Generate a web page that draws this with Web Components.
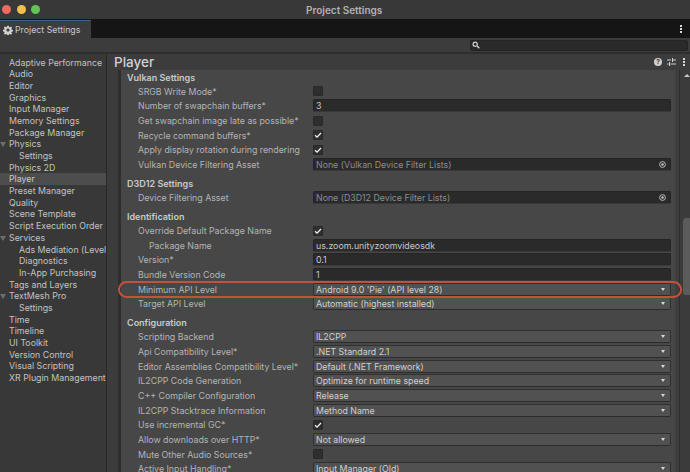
<!DOCTYPE html>
<html>
<head>
<meta charset="utf-8">
<title>Project Settings</title>
<style>
  html, body { margin: 0; padding: 0; background: #3c3c3c; }
  body { width: 690px; height: 472px; overflow: hidden; font-family: Inter, "Liberation Sans", sans-serif; font-size: 8.8px; color: #c4c4c4; }
</style>
</head>
<body>
<settings-window>
  <nav-item>Adaptive Performance</nav-item>
  <nav-item>Audio</nav-item>
  <nav-item>Editor</nav-item>
  <nav-item>Graphics</nav-item>
  <nav-item>Input Manager</nav-item>
  <nav-item>Memory Settings</nav-item>
  <nav-item>Package Manager</nav-item>
  <nav-item fold>Physics</nav-item>
  <nav-item sub>Settings</nav-item>
  <nav-item>Physics 2D</nav-item>
  <nav-item active>Player</nav-item>
  <nav-item>Preset Manager</nav-item>
  <nav-item>Quality</nav-item>
  <nav-item>Scene Template</nav-item>
  <nav-item>Script Execution Order</nav-item>
  <nav-item fold>Services</nav-item>
  <nav-item sub>Ads Mediation (Level</nav-item>
  <nav-item sub>Diagnostics</nav-item>
  <nav-item sub>In-App Purchasing</nav-item>
  <nav-item>Tags and Layers</nav-item>
  <nav-item fold>TextMesh Pro</nav-item>
  <nav-item sub>Settings</nav-item>
  <nav-item>Time</nav-item>
  <nav-item>Timeline</nav-item>
  <nav-item>UI Toolkit</nav-item>
  <nav-item>Version Control</nav-item>
  <nav-item>Visual Scripting</nav-item>
  <nav-item>XR Plugin Management</nav-item>

  <section-head slot="props" style="height:12px">Vulkan Settings</section-head>
  <prop-row slot="props" label="SRGB Write Mode*" type="check"></prop-row>
  <prop-row slot="props" label="Number of swapchain buffers*" type="text" value="3"></prop-row>
  <prop-row slot="props" label="Get swapchain image late as possible*" type="check"></prop-row>
  <prop-row slot="props" label="Recycle command buffers*" type="check" checked></prop-row>
  <prop-row slot="props" label="Apply display rotation during rendering" type="check" checked></prop-row>
  <prop-row slot="props" label="Vulkan Device Filtering Asset" type="object" value="None (Vulkan Device Filter Lists)"></prop-row>
  <section-head slot="props">D3D12 Settings</section-head>
  <prop-row slot="props" label="Device Filtering Asset" type="object" value="None (D3D12 Device Filter Lists)"></prop-row>
  <section-head slot="props">Identification</section-head>
  <prop-row slot="props" label="Override Default Package Name" type="check" checked></prop-row>
  <prop-row slot="props" label="Package Name" type="text" value="us.zoom.unityzoomvideosdk" indent></prop-row>
  <prop-row slot="props" label="Version*" type="text" value="0.1"></prop-row>
  <prop-row slot="props" label="Bundle Version Code" type="text" value="1"></prop-row>
  <prop-row slot="props" label="Minimum API Level" type="select" value="Android 9.0 'Pie' (API level 28)"></prop-row>
  <prop-row slot="props" label="Target API Level" type="select" value="Automatic (highest installed)"></prop-row>
  <section-head slot="props">Configuration</section-head>
  <prop-row slot="props" label="Scripting Backend" type="select" value="IL2CPP"></prop-row>
  <prop-row slot="props" label="Api Compatibility Level*" type="select" value=".NET Standard 2.1"></prop-row>
  <prop-row slot="props" label="Editor Assemblies Compatibility Level*" type="select" value="Default (.NET Framework)"></prop-row>
  <prop-row slot="props" label="IL2CPP Code Generation" type="select" value="Optimize for runtime speed"></prop-row>
  <prop-row slot="props" label="C++ Compiler Configuration" type="select" value="Release"></prop-row>
  <prop-row slot="props" label="IL2CPP Stacktrace Information" type="select" value="Method Name"></prop-row>
  <prop-row slot="props" label="Use incremental GC*" type="check" checked></prop-row>
  <prop-row slot="props" label="Allow downloads over HTTP*" type="select" value="Not allowed"></prop-row>
  <prop-row slot="props" label="Mute Other Audio Sources*" type="check"></prop-row>
  <prop-row slot="props" label="Active Input Handling*" type="select" value="Input Manager (Old)"></prop-row>
</settings-window>

<script>
(function() {
  //=== Window frame
  class SettingsWindow extends HTMLElement {
    constructor() {
      super();
      const shadowRoot = this.attachShadow({ mode: 'open' });
      shadowRoot.innerHTML = `
<style>
:host { display: flex; flex-direction: column; width: 690px; height: 472px; position: relative; overflow: hidden; background: #3c3c3c; }
.title { height: 19px; flex: none; display: flex; align-items: center; background: #383838; position: relative; }
.lights { display: flex; gap: 5.67px; padding-left: 2px; }
.lights i { width: 9px; height: 9px; border-radius: 50%; }
.name { flex: 1; text-align: center; font-size: 10px; font-weight: 600; color: #b2b2b2; margin-left: -42px; }
.tabs { height: 19px; flex: none; display: flex; justify-content: space-between; align-items: center; background: #151515; }
.tab { width: 91px; height: 18px; box-sizing: border-box; align-self: flex-end; background: #3c3c3c; border-top: 1px solid #3f6287; display: flex; align-items: center; gap: 2px; padding-left: 3px; font-size: 8.8px; color: #c8c8c8; }
.dots { display: block; margin-right: 8px; }
.tools { height: 16px; flex: none; display: flex; justify-content: flex-end; align-items: center; box-sizing: border-box; background: #3c3c3c; border-bottom: 2px solid #2e2e2e; padding-right: 2px; }
.search { width: 218px; height: 11px; border-radius: 3px; background: #2a2a2a; box-shadow: inset 0 0 0 1px #242424; display: flex; align-items: center; padding-left: 2px; box-sizing: border-box; }
.main { flex: 1; display: flex; min-height: 0; }
.side { width: 106px; flex: none; padding-top: 2.5px; border-right: 1px solid #282828; background: #383838; overflow: hidden; }
.right { flex: 1; display: flex; min-width: 0; flex-direction: column; }
.head { height: 16px; flex: none; display: flex; align-items: center; justify-content: space-between; background: #3c3c3c; padding: 0 5px 0 7px; }
.head h1 { margin: 0; font-size: 13.5px; font-weight: 500; color: #d2d2d2; line-height: 16px; }
.head .icons { display: flex; align-items: center; gap: 5px; }
.body { flex: 1; display: flex; min-height: 0; }
.gutter { width: 11px; flex: none; background: #3c3c3c; }
.bar { width: 3px; flex: none; background: #2e2e2e; }
.panel { width: 554px; flex: none; background: #474747; padding-top: 2px; box-sizing: border-box; overflow: hidden; }
.scroll { flex: 1; display: flex; background: #3e3e3e; position: relative; }
.scroll .lane { margin-left: 4px; flex: 1; background: #3b3b3b; border-left: 1px solid #2c2c2c; position: relative; }
.arrow { position: absolute; right: 0; top: 4px; width: 0; height: 0; border: 3px solid transparent; border-top: 0; border-bottom: 3px solid #c8c8c8; }
.thumb { position: absolute; left: 3px; right: 0; top: 148px; height: 77px; background: #5b5b5b; border-radius: 3px 0 0 3px; }
.oval { position: absolute; left: 118px; top: 281px; width: 564px; height: 17px; box-sizing: border-box; border: 2px solid #c4513a; border-radius: 9px; pointer-events: none; }
</style>
<div class="title">
  <div class="lights"><i style="background:#ec6a5e"></i><i style="background:#f4bf4f"></i><i style="background:#61c554"></i></div>
  <div class="name">Project Settings</div>
</div>
<div class="tabs">
  <div class="tab">
    <svg width="10" height="10" viewBox="0 0 16 16"><path fill="#d0d0d0" fill-rule="evenodd" d="M6.700 1h2.600l.4 2 1.300.6 1.800-1.100 1.800 1.800-1.100 1.800.5 1.300 2 .4v2.400l-2 .4-.5 1.300 1.100 1.800-1.800 1.800-1.800-1.100-1.300.5-.4 2H6.700l-.4-2-1.300-.5-1.800 1.100-1.800-1.800 1.100-1.800-.5-1.300-2-.4V7.400l2-.4.5-1.300-1.100-1.800 1.800-1.800L5 3.600l1.300-.6zM8 5.500a2.500 2.500 0 1 0 0 5 2.500 2.500 0 0 0 0-5z"/></svg>
    <span>Project Settings</span>
  </div>
  <svg class="dots" width="2" height="8" viewBox="0 0 2 8"><path fill="#d8d8d8" d="M0 0h2v2H0zM0 3h2v2H0zM0 6h2v2H0z"/></svg>
</div>
<div class="tools">
  <div class="search">
    <svg width="8" height="8" viewBox="0 0 8 8"><circle cx="3.200" cy="3.200" r="2.100" fill="none" stroke="#cfcfcf" stroke-width="1.200"/><path d="M4.800 4.800 7.300 7.300" stroke="#cfcfcf" stroke-width="1.400"/></svg>
  </div>
</div>
<div class="main">
  <div class="side"><slot></slot></div>
  <div class="right">
    <div class="head">
      <h1>Player</h1>
      <div class="icons">
        <svg width="8" height="8" viewBox="0 0 8 8"><circle cx="4" cy="4" r="4" fill="#cfcfcf"/><text x="4" y="6.400" text-anchor="middle" font-family="Inter, sans-serif" font-size="6.500" font-weight="700" fill="#3c3c3c">?</text></svg>
        <svg width="9" height="8" viewBox="0 0 9 8"><path stroke="#d0d0d0" stroke-width="1" fill="none" d="M0 2h4M6 2h3M5.500 0v4M0 6h1.500M3.500 6H9M2.500 4v4"/></svg>
        <svg width="2" height="8" viewBox="0 0 2 8" style="margin-left:2px"><path fill="#d8d8d8" d="M0 0h2v2H0zM0 3h2v2H0zM0 6h2v2H0z"/></svg>
      </div>
    </div>
    <div class="body">
      <div class="gutter"></div>
      <div class="bar"></div>
      <div class="panel"><slot name="props"></slot></div>
      <div class="scroll"><div class="lane"><div class="arrow"></div><div class="thumb"></div></div></div>
    </div>
  </div>
</div>
<div class="oval"></div>
`;
    }
  }

  //=== Sidebar entries
  class NavItem extends HTMLElement {
    constructor() {
      super();
      const shadowRoot = this.attachShadow({ mode: 'open' });
      shadowRoot.innerHTML = `
<style>
:host { display: block; height: 11.69px; line-height: 11.69px; padding-left: 9px; white-space: nowrap; position: relative; font-size: 8.8px; color: #c2c2c2; }
:host([sub]) { padding-left: 19px; }
:host([active]) { background: #4d4d4d; color: #c8c8c8; }
:host([fold])::before { content: ""; position: absolute; left: 0; top: 4px; border: 3px solid transparent; border-bottom: 0; border-top: 5px solid #6e6e6e; }
</style>
<slot></slot>
`;
    }
  }

  //=== Inspector section titles
  class SectionHead extends HTMLElement {
    constructor() {
      super();
      const shadowRoot = this.attachShadow({ mode: 'open' });
      shadowRoot.innerHTML = `
<style>
:host { display: flex; align-items: flex-end; height: 18.3px; line-height: 12px; padding-left: 6px; font-size: 9px; font-weight: 600; color: #cacaca; box-sizing: border-box; }
</style>
<slot></slot>
`;
    }
  }

  //=== Inspector property rows
  const renderControl = (type, value, checked) => {
    if (type === 'check') {
      const tick = checked ? '<svg width="8" height="8" viewBox="0 0 8 8"><path d="M1 4.300 3 6.200 7 2" fill="none" stroke="#f2f2f2" stroke-width="1.300"/></svg>' : '';
      return `<div class="check">${tick}</div>`;
    }
    if (type === 'select') {
      return `<div class="field select"><span>${value}</span><i class="tri"></i></div>`;
    }
    if (type === 'object') {
      return `<div class="field object"><span>${value}</span><svg width="7" height="7" viewBox="0 0 7 7"><circle cx="3.500" cy="3.500" r="2.900" fill="none" stroke="#c8c8c8" stroke-width="0.900"/><circle cx="3.500" cy="3.500" r="1.200" fill="#c8c8c8"/></svg></div>`;
    }
    return `<div class="field"><span>${value}</span></div>`;
  };

  class PropRow extends HTMLElement {
    constructor() {
      super();
      const shadowRoot = this.attachShadow({ mode: 'open' });
      const label = this.getAttribute('label') || '';
      const value = this.getAttribute('value') || '';
      const type = this.getAttribute('type') || 'text';
      shadowRoot.innerHTML = `
<style>
:host { display: flex; align-items: center; height: 14.67px; padding-left: 17px; font-size: 8.8px; color: #b4b4b4; }
:host([indent]) .label { padding-left: 11px; width: 164px; }
.label { width: 175px; flex: none; white-space: nowrap; }
.check { width: 10px; height: 10px; background: #2e2e2e; box-shadow: inset 0 0 0 1px #292929; border-radius: 2px; display: flex; align-items: center; justify-content: center; }
.field { width: 358px; height: 13px; box-sizing: border-box; flex: none; background: #2a2a2a; border: 1px solid #242424; border-bottom-color: #383838; border-radius: 2px; display: flex; align-items: center; justify-content: space-between; padding: 0 4px 0 2px; color: #c8c8c8; white-space: nowrap; }
.select { background: #515151; border-color: #303030; border-bottom-color: #2c2c2c; color: #d0d0d0; }
.object { background: #2a2a2a; color: #8d8d8d; }
.tri { width: 0; height: 0; border: 2.500px solid transparent; border-bottom: 0; border-top: 3px solid #d8d8d8; margin-right: 1px; }
</style>
<div class="label">${label}</div>
${renderControl(type, value, this.hasAttribute('checked'))}
`;
    }
  }

  window.customElements.define('settings-window', SettingsWindow);
  window.customElements.define('nav-item', NavItem);
  window.customElements.define('section-head', SectionHead);
  window.customElements.define('prop-row', PropRow);
})();
</script>
</body>
</html>
